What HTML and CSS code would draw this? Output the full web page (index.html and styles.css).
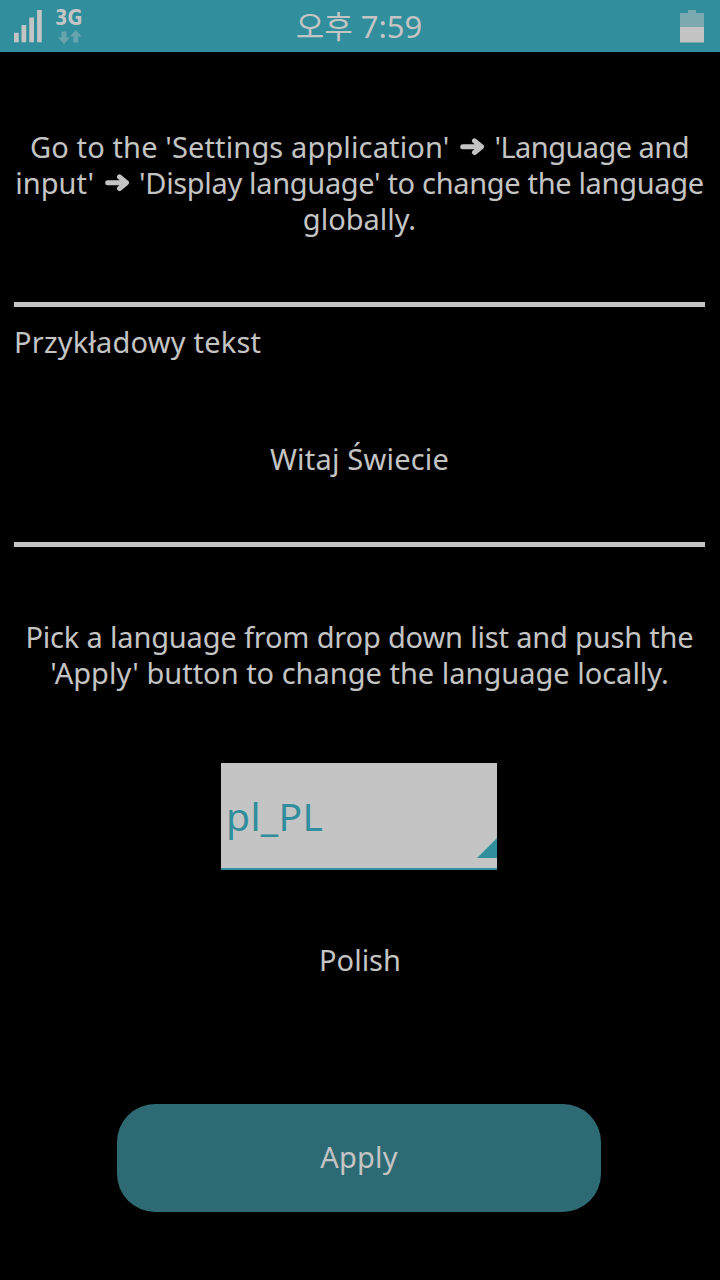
FILE: index.html
```html
<!DOCTYPE html>
<html lang="en">
<head>
<meta charset="utf-8">
<title>Language</title>
<link rel="stylesheet" href="styles.css">
</head>
<body>
<div class="screen">
  <header class="statusbar">
    <div class="network">
      <svg class="signal" width="28" height="33" viewBox="0 0 28 33"><path d="M0 22.700h4.700V32.300H0zM7.500 15h4.700v17.300H7.500zM15.300 7.400H20v24.900h-4.700zM23.100 0H27.800v32.300h-4.700z" fill="#c4c4c4"/></svg>
      <div class="data">
        <span class="data-type">3G</span>
        <svg class="transfer" width="24" height="14" viewBox="0 0 24 14"><path d="M3.500 1.500h5v6H12L6 14 0 7.500h3.500zM15.300 12.500v-6h-3.500l6-6.500 6 6.500h-3.500v6z" fill="#68a4ad"/></svg>
      </div>
    </div>
    <div class="clock"><span class="meridiem">오후</span> <span class="time">7:59</span></div>
    <svg class="battery" width="24" height="33" viewBox="0 0 24 33"><path d="M8 0h8v3h8v14H0V3h8z" fill="#7aa9b0"/><path d="M0 17h24v15.500H0z" fill="#c4c4c4"/></svg>
  </header>
  <main class="content">
    <p class="global-hint">
      <span class="line"><span class="settings">Go to the 'Settings application'</span> <svg class="arrow" width="24" height="18" viewBox="0 0 24 18"><path d="M2.700 8.700H19M14.500 2.900l7 5.800-7 5.800"/></svg> <span class="input">'Language and</span></span>
      <span class="line">input' <svg class="arrow" width="24" height="18" viewBox="0 0 24 18"><path d="M2.700 8.700H19M14.500 2.900l7 5.800-7 5.800"/></svg> <span class="display">'Display language' to change the language</span></span>
      <span class="line">globally.</span>
    </p>
    <section class="sample">
      <p class="sample-title">Przykładowy tekst</p>
      <p class="sample-text">Witaj Świecie</p>
    </section>
    <p class="local-hint">
      <span class="line pick">Pick a language from drop down list and push the</span>
      <span class="line">'Apply' button to change the language locally.</span>
    </p>
    <div class="dropdown"><span class="dropdown-value">pl_PL</span><svg class="corner" width="20" height="20" viewBox="0 0 20 20"><path d="M20 0v20H0z" fill="#308e9d"/></svg></div>
    <p class="language-name">Polish</p>
    <button class="apply" type="button">Apply</button>
  </main>
</div>
</body>
</html>
```
FILE: styles.css
```css
* { box-sizing: border-box; }
body { margin: 0; background: #000; }
p { margin: 0; }
.screen {
  width: 720px;
  height: 1280px;
  overflow: hidden;
  background: #000;
  color: #c4c4c4;
  font: 29px/36px "Noto Sans", "Noto Sans CJK KR", sans-serif;
}
.statusbar {
  display: grid;
  grid-template-columns: 1fr auto 1fr;
  height: 52px;
  padding: 10px 16px 0 14px;
  background: #308e9d;
}
.network { display: flex; gap: 13px; }
.data { width: 28px; }
.data-type {
  display: block;
  font: bold 21px/17px "DejaVu Sans", sans-serif;
  transform: scaleX(.86);
  transform-origin: left;
}
.transfer { display: block; margin: 3px 0 0 3px; }
.clock {
  margin-top: -1px;
  font-size: 31px;
  line-height: 32px;
  white-space: nowrap;
}
.meridiem { font-family: "Noto Sans CJK KR", sans-serif; }
.battery { justify-self: end; }
.content {
  display: flex;
  flex-direction: column;
  align-items: center;
  padding: 77px 15px 0 14px;
}
.line { display: block; white-space: nowrap; }
.global-hint, .local-hint { text-align: center; }
.settings { letter-spacing: .13px; }
.input { letter-spacing: -.55px; }
.display { letter-spacing: -.33px; }
.pick { letter-spacing: -.17px; }
.arrow {
  margin: 0 3px;
  fill: none;
  stroke: #c4c4c4;
  stroke-width: 5px;
  stroke-linecap: round;
  stroke-linejoin: round;
  vertical-align: 2px;
}
.sample {
  align-self: stretch;
  height: 245px;
  margin-top: 65px;
  padding-top: 17px;
  border-top: 5px solid #c4c4c4;
  border-bottom: 5px solid #c4c4c4;
}
.sample-title, .sample-text { letter-spacing: .2px; }
.sample-text { margin-top: 81px; text-align: center; }
.local-hint { margin-top: 72px; }
.dropdown {
  display: flex;
  justify-content: space-between;
  width: 276px;
  height: 107px;
  margin: 72px 1px 0 0;
  padding-left: 5px;
  background: #c4c4c4;
  border-bottom: 2px solid #308e9d;
  color: #308e9d;
  font-size: 39px;
  line-height: 106px;
  letter-spacing: .4px;
}
.corner { margin-top: 75px; }
.language-name { margin: 72px 0 0 1px; }
.apply {
  width: 484px;
  height: 108px;
  margin: 126px 1px 0 0;
  padding: 0 0 2px;
  border: 0;
  border-radius: 38px;
  background: #2e6a73;
  color: inherit;
  font: inherit;
  letter-spacing: .2px;
}
```
